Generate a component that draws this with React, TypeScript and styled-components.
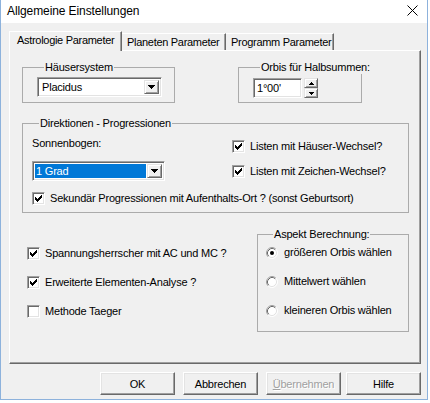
import React from "react";
import styled, { createGlobalStyle } from "styled-components";

const GlobalStyle = createGlobalStyle`
  html, body { margin: 0; padding: 0; background: #ffffff; }
  body {
    font-family: "Liberation Sans", Arial, sans-serif;
    font-size: 11px;
    letter-spacing: -0.2px;
    color: #000;
  }
  * { box-sizing: border-box; }
`;

const Window = styled.div`
  width: 428px;
  height: 400px;
  border: 1px solid #8db2dc;
  border-top: none;
  background: #f0f0f0;
  display: flex;
  flex-direction: column;
`;

const TitleBar = styled.div`
  height: 23px;
  flex: none;
  background: #ffffff;
  display: flex;
  align-items: center;
  justify-content: space-between;
  padding: 0 9px 2px 6px;
  font-size: 12px;
  letter-spacing: -0.1px;
`;

const Body = styled.div`
  display: flex;
  flex-direction: column;
  padding: 8px 6px 0 8px;
`;

const TabStrip = styled.div`
  height: 19px;
  display: flex;
  align-items: flex-end;
`;

const Tab = styled.div<{ $active?: boolean; $w: number }>`
  position: relative;
  z-index: ${(p) => (p.$active ? 1 : 0)};
  width: ${(p) => p.$w}px;
  height: ${(p) => (p.$active ? 20 : 17)}px;
  margin-bottom: ${(p) => (p.$active ? -1 : 0)}px;
  background: #f0f0f0;
  border-top: 1px solid #ffffff;
  border-left: ${(p) => (p.$active ? "1px solid #ffffff" : "none")};
  border-right: 1px solid #696969;
  box-shadow: inset -1px 0 0 #a0a0a0;
  padding: ${(p) => (p.$active ? "2px 0 0 7px" : "2px 0 0 5px")};
  line-height: 13px;
  letter-spacing: -0.3px;
  white-space: nowrap;
`;

const Panel = styled.div`
  height: 314px;
  border-top: 1px solid #ffffff;
  border-left: 1px solid #ffffff;
  border-right: 1px solid #696969;
  border-bottom: 1px solid #696969;
  box-shadow: inset -1px -1px 0 #a0a0a0;
  padding: 10px 11px 0 12px;
  display: flex;
  flex-direction: column;
`;

const Row = styled.div<{ $gap?: number; $top?: number }>`
  display: flex;
  align-items: stretch;
  gap: ${(p) => p.$gap ?? 0}px;
  margin-top: ${(p) => p.$top ?? 0}px;
`;

const Group = styled.fieldset<{ $w: number; $h: number; $pad: string }>`
  margin: 0;
  min-width: 0;
  width: ${(p) => p.$w}px;
  height: ${(p) => p.$h}px;
  border: 1px solid #ababab;
  border-radius: 0;
  padding: ${(p) => p.$pad};
`;

const Legend = styled.legend`
  margin-left: 7px;
  padding: 0 1px;
  line-height: 13px;
  font-size: 11px;
  white-space: nowrap;
`;

const Combo = styled.div<{ $w: number }>`
  width: ${(p) => p.$w}px;
  height: 20px;
  background: #ffffff;
  border-top: 1px solid #a0a0a0;
  border-left: 1px solid #a0a0a0;
  border-right: 1px solid #ffffff;
  border-bottom: 1px solid #ffffff;
  box-shadow: inset 1px 1px 0 #696969, inset -1px -1px 0 #e3e3e3;
  padding: 2px;
  display: flex;
  align-items: stretch;
`;

const ComboText = styled.div<{ $selected?: boolean }>`
  flex: 1;
  padding-left: ${(p) => (p.$selected ? 1 : 2)}px;
  line-height: 14px;
  background: ${(p) => (p.$selected ? "#0078d7" : "transparent")};
  color: ${(p) => (p.$selected ? "#ffffff" : "#000000")};
  margin-right: ${(p) => (p.$selected ? 1 : 0)}px;
`;

const DropButton = styled.div`
  width: 15px;
  background: #f0f0f0;
  border-top: 1px solid #e3e3e3;
  border-left: 1px solid #e3e3e3;
  border-right: 1px solid #696969;
  border-bottom: 1px solid #696969;
  box-shadow: inset 1px 1px 0 #ffffff, inset -1px -1px 0 #a0a0a0;
  display: flex;
  align-items: center;
  justify-content: center;
`;

const TextBox = styled.div`
  width: 49px;
  height: 20px;
  background: #ffffff;
  border-top: 1px solid #a0a0a0;
  border-left: 1px solid #a0a0a0;
  border-right: 1px solid #ffffff;
  border-bottom: 1px solid #ffffff;
  box-shadow: inset 1px 1px 0 #696969, inset -1px -1px 0 #e3e3e3;
  padding: 2px 3px;
  line-height: 14px;
`;

const Spin = styled.div`
  display: flex;
  flex-direction: column;
  width: 14px;
  margin-left: 2px;
`;

const SpinButton = styled.div`
  height: 10px;
  background: #f0f0f0;
  border-top: 1px solid #e3e3e3;
  border-left: 1px solid #e3e3e3;
  border-right: 1px solid #696969;
  border-bottom: 1px solid #696969;
  box-shadow: inset 1px 1px 0 #ffffff, inset -1px -1px 0 #a0a0a0;
  display: flex;
  align-items: center;
  justify-content: center;
`;

const DirGrid = styled.div`
  display: grid;
  grid-template-columns: 200px 1fr;
`;

const LeftCol = styled.div`
  display: flex;
  flex-direction: column;
`;

const RightCol = styled.div`
  display: flex;
  flex-direction: column;
  gap: 12px;
  padding-top: 10px;
`;

const Label = styled.div<{ $top?: number }>`
  line-height: 13px;
  padding-top: ${(p) => p.$top ?? 0}px;
  margin-bottom: 11px;
`;

const CheckRow = styled.div<{ $top?: number }>`
  display: flex;
  align-items: center;
  gap: 5px;
  height: 13px;
  line-height: 13px;
  margin-top: ${(p) => p.$top ?? 0}px;
  white-space: nowrap;
`;

const Box = styled.span`
  width: 13px;
  height: 13px;
  flex: none;
  background: #ffffff;
  border-top: 1px solid #a0a0a0;
  border-left: 1px solid #a0a0a0;
  border-right: 1px solid #ffffff;
  border-bottom: 1px solid #ffffff;
  box-shadow: inset 1px 1px 0 #696969, inset -1px -1px 0 #e3e3e3;
  display: flex;
  align-items: center;
  justify-content: center;
`;

const LowerLeft = styled.div`
  display: flex;
  flex-direction: column;
  gap: 16px;
  padding: 19px 0 0 5px;
`;

const Aspekt = styled(Group)`
  margin-left: auto;
`;

const RadioList = styled.div`
  display: flex;
  flex-direction: column;
  gap: 16px;
`;

const RadioRow = styled.div`
  display: flex;
  align-items: center;
  gap: 6px;
  height: 13px;
  line-height: 13px;
  white-space: nowrap;
`;

const ButtonBar = styled.div`
  display: flex;
  justify-content: flex-end;
  gap: 8px;
  margin-top: 8px;
`;

const Button = styled.div<{ $disabled?: boolean; $tight?: boolean }>`
  width: 75px;
  height: 23px;
  margin-left: ${(p) => (p.$tight ? -3 : 0)}px;
  background: #f0f0f0;
  border-top: 1px solid #ffffff;
  border-left: 1px solid #ffffff;
  border-right: 1px solid #696969;
  border-bottom: 1px solid #696969;
  box-shadow: inset -1px -1px 0 #a0a0a0, inset 1px 1px 0 #e3e3e3;
  display: flex;
  align-items: center;
  justify-content: center;
  color: ${(p) => (p.$disabled ? "#a0a0a0" : "#000")};
  text-shadow: ${(p) => (p.$disabled ? "1px 1px 0 #ffffff" : "none")};
`;

const Mnemonic = styled.span`
  text-decoration: underline;
`;

const Arrow = ({ up, w = 7 }: { up?: boolean; w?: number }) => {
  const h = Math.ceil(w / 2);
  return (
    <svg width={w} height={h} viewBox={`0 0 ${w} ${h}`} shapeRendering="crispEdges">
      <polygon
        points={up ? `${w / 2},0 ${w},${h} 0,${h}` : `0,0 ${w},0 ${w / 2},${h}`}
        fill="#000"
      />
    </svg>
  );
};

const Check = () => (
  <svg width="9" height="9" viewBox="0 0 9 9" shapeRendering="crispEdges">
    <polygon points="1,3 3,5 8,0 8,3 3,8 1,6" fill="#000" />
  </svg>
);

const CheckBox = ({ checked }: { checked?: boolean }) => <Box>{checked && <Check />}</Box>;

const Radio = ({ checked }: { checked?: boolean }) => (
  <svg width="12" height="12" viewBox="0 0 12 12">
    <circle cx="6" cy="6" r="5" fill="#ffffff" />
    <path d="M2.11 9.89 A5.5 5.5 0 0 1 9.89 2.11" stroke="#a0a0a0" fill="none" />
    <path d="M9.89 2.11 A5.5 5.5 0 0 1 2.11 9.89" stroke="#ffffff" fill="none" />
    <path d="M2.82 9.18 A4.5 4.5 0 0 1 9.18 2.82" stroke="#696969" fill="none" />
    <path d="M9.18 2.82 A4.5 4.5 0 0 1 2.82 9.18" stroke="#e3e3e3" fill="none" />
    {checked && <circle cx="6" cy="6" r="2" fill="#000" />}
  </svg>
);

const CloseIcon = () => (
  <svg width="11" height="11" viewBox="0 0 11 11">
    <path d="M0.5 0.5 L10.5 10.5 M10.5 0.5 L0.5 10.5" stroke="#000" strokeWidth="1" />
  </svg>
);

export default function App() {
  return (
    <>
      <GlobalStyle />
      <Window>
        <TitleBar>
          <span>Allgemeine Einstellungen</span>
          <CloseIcon />
        </TitleBar>
        <Body>
          <TabStrip>
            <Tab $active $w={113}>Astrologie Parameter</Tab>
            <Tab $w={104}>Planeten Parameter</Tab>
            <Tab $w={108}>Programm Parameter</Tab>
          </TabStrip>
          <Panel>
            <Row $gap={63}>
              <Group $w={153} $h={42} $pad="3px 12px 5px 14px">
                <Legend>Häusersystem</Legend>
                <Combo $w={125}>
                  <ComboText>Placidus</ComboText>
                  <DropButton>
                    <Arrow />
                  </DropButton>
                </Combo>
              </Group>
              <Group $w={124} $h={42} $pad="4px 4px 4px 14px">
                <Legend>Orbis für Halbsummen:</Legend>
                <Row>
                  <TextBox>1°00'</TextBox>
                  <Spin>
                    <SpinButton>
                      <Arrow up w={5} />
                    </SpinButton>
                    <SpinButton>
                      <Arrow w={5} />
                    </SpinButton>
                  </Spin>
                </Row>
              </Group>
            </Row>

            <Row $top={14}>
              <Group $w={387} $h={96} $pad="0 8px 8px 9px">
                <Legend>Direktionen - Progressionen</Legend>
                <DirGrid>
                  <LeftCol>
                    <Label $top={7}>Sonnenbogen:</Label>
                    <Combo $w={133}>
                      <ComboText $selected>1 Grad</ComboText>
                      <DropButton>
                        <Arrow />
                      </DropButton>
                    </Combo>
                  </LeftCol>
                  <RightCol>
                    <CheckRow>
                      <CheckBox checked />
                      Listen mit Häuser-Wechsel?
                    </CheckRow>
                    <CheckRow>
                      <CheckBox checked />
                      Listen mit Zeichen-Wechsel?
                    </CheckRow>
                  </RightCol>
                </DirGrid>
                <CheckRow $top={11}>
                  <CheckBox checked />
                  Sekundär Progressionen mit Aufenthalts-Ort ? (sonst Geburtsort)
                </CheckRow>
              </Group>
            </Row>

            <Row $top={15}>
              <LowerLeft>
                <CheckRow>
                  <CheckBox checked />
                  Spannungsherrscher mit AC und MC ?
                </CheckRow>
                <CheckRow>
                  <CheckBox checked />
                  Erweiterte Elementen-Analyse ?
                </CheckRow>
                <CheckRow>
                  <CheckBox />
                  Methode Taeger
                </CheckRow>
              </LowerLeft>
              <Aspekt $w={152} $h={104} $pad="5px 8px 0 8px">
                <Legend>Aspekt Berechnung:</Legend>
                <RadioList>
                  <RadioRow>
                    <Radio checked />
                    größeren Orbis wählen
                  </RadioRow>
                  <RadioRow>
                    <Radio />
                    Mittelwert wählen
                  </RadioRow>
                  <RadioRow>
                    <Radio />
                    kleineren Orbis wählen
                  </RadioRow>
                </RadioList>
              </Aspekt>
            </Row>
          </Panel>
          <ButtonBar>
            <Button>OK</Button>
            <Button>Abbrechen</Button>
            <Button $disabled>
              <span>
                <Mnemonic>Ü</Mnemonic>bernehmen
              </span>
            </Button>
            <Button $tight>Hilfe</Button>
          </ButtonBar>
        </Body>
      </Window>
    </>
  );
}
